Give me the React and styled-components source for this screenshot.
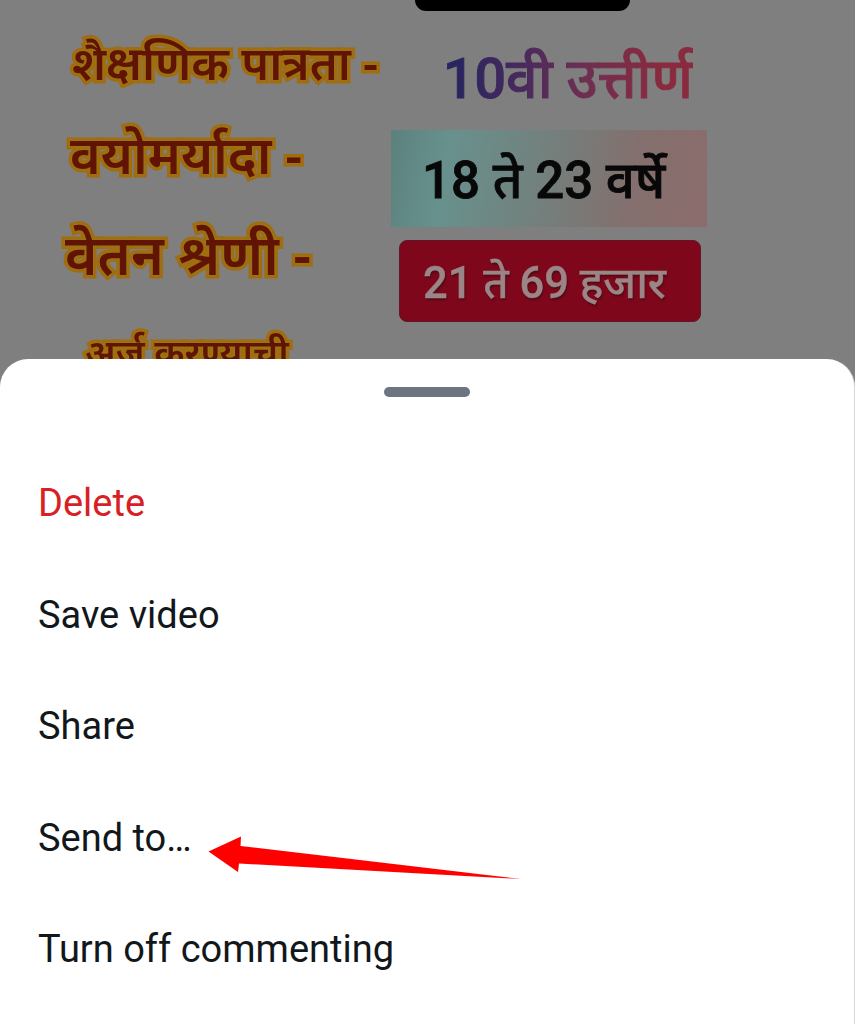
import styled, { createGlobalStyle } from 'styled-components'

const GlobalStyle = createGlobalStyle`
	* {
		box-sizing: border-box;
	}
	body {
		margin: 0;
		background: #7f7f7f;
	}
`
const Screen = styled.div`
	width: 855px;
	height: 1024px;
	display: flex;
	flex-direction: column;
	overflow: hidden;
	background: #7f7f7f;
	font-family: Roboto, 'Noto Sans', sans-serif;
`
const Poster = styled.div`
	height: 359px;
	flex: none;
	display: grid;
	grid-template-columns: 391px 316px;
	overflow: hidden;
	white-space: nowrap;
	filter: blur(0.7px);
`
const Labels = styled.div`
	display: flex;
	flex-direction: column;
	padding-top: 16px;
	font-family: 'Noto Sans', 'Noto Sans Devanagari', sans-serif;
`
const Label = styled.div`
	height: ${(props) => props.$height}px;
	line-height: ${(props) => props.$height}px;
	padding-left: ${(props) => props.$indent}px;
	font-size: ${(props) => props.$size}px;
	font-weight: 600;
	color: #621404;
	-webkit-text-stroke: 7px #a16c10;
	paint-order: stroke fill;
	text-shadow: 0 0 3px #94801c;
`
const Values = styled.div`
	display: flex;
	flex-direction: column;
	align-items: center;
	font-family: Roboto, 'Noto Sans', 'Noto Sans Devanagari', sans-serif;
	font-weight: 500;
`
const Notch = styled.div`
	width: 215px;
	height: 11px;
	align-self: flex-end;
	margin-right: 77px;
	border-radius: 0 0 12px 12px;
	background: #000;
`
const Education = styled.div`
	height: 119px;
	line-height: 137px;
	padding-left: 52px;
	align-self: flex-start;
	font-size: 55.5px;
	color: transparent;
	-webkit-text-stroke: 1px transparent;
	background: linear-gradient(90deg, #29255f 22%, #4b2a5c 45%, #6f2f50 65%, #8a2a3e 90%);
	background-clip: text;
`
const AgeBox = styled.div`
	width: 316px;
	height: 97px;
	line-height: 102px;
	padding-left: 31px;
	font-size: 51px;
	color: #080808;
	-webkit-text-stroke: 0.8px #080808;
	background: linear-gradient(100deg, #5c817d, #67918d 18%, #747f7c 50%, #83706e 75%, #8b6c6b);
`
const SalaryBox = styled.div`
	width: 302px;
	height: 82px;
	line-height: 86px;
	margin-top: 13px;
	margin-right: -2px;
	padding-left: 23px;
	border-radius: 8px;
	border: 1px solid #63162a;
	font-size: 43.5px;
	color: #9b8586;
	-webkit-text-stroke: 0.4px #9b8586;
	text-shadow: 1px 2px 2px #4c0b15;
	background: #7f071b;
`
const Sheet = styled.div`
	position: relative;
	flex: 1;
	display: flex;
	flex-direction: column;
	border-radius: 28px 28px 0 0;
	border-right: 1px solid #d8d8d8;
	background: #fff;
`
const Handle = styled.div`
	width: 86px;
	height: 10px;
	margin: 28px auto 51px;
	border-radius: 5px;
	background: #6c7580;
`
const MenuItem = styled.div`
	height: 111.6px;
	line-height: 111.6px;
	padding-left: 38px;
	font-size: 38px;
	color: ${(props) => (props.$danger ? '#d81f26' : '#12171b')};
`
const Arrow = styled.svg`
	position: absolute;
	left: 208px;
	top: 477px;
`

const labels = [
	{ text: 'शैक्षणिक पात्रता -', height: 92, indent: 72, size: 46.8 },
	{ text: 'वयोमर्यादा -', height: 92, indent: 70, size: 52.5 },
	{ text: 'वेतन श्रेणी -', height: 108, indent: 65, size: 55.5 },
	{ text: 'अर्ज करण्याची', height: 88, indent: 85, size: 37.5 },
]

const menuItems = [
	{ text: 'Delete', danger: true },
	{ text: 'Save video' },
	{ text: 'Share' },
	{ text: 'Send to…' },
	{ text: 'Turn off commenting' },
]

const App = () => {
	return (
		<Screen>
			<GlobalStyle />
			<Poster>
				<Labels>
					{labels.map((label) => (
						<Label
							key={label.text}
							$height={label.height}
							$indent={label.indent}
							$size={label.size}
						>
							{label.text}
						</Label>
					))}
				</Labels>
				<Values>
					<Notch />
					<Education>10वी उत्तीर्ण</Education>
					<AgeBox>18 ते 23 वर्षे</AgeBox>
					<SalaryBox>21 ते 69 हजार</SalaryBox>
				</Values>
			</Poster>
			<Sheet>
				<Handle />
				{menuItems.map((item) => (
					<MenuItem key={item.text} $danger={item.danger}>
						{item.text}
					</MenuItem>
				))}
				<Arrow width="314" height="44" viewBox="0 0 314 44">
					<path d="M0.5 15.5 33 0.5 32.5 10 313 43 31 27.5 30 36Z" fill="#fe0000" />
				</Arrow>
			</Sheet>
		</Screen>
	)
}

export default App
